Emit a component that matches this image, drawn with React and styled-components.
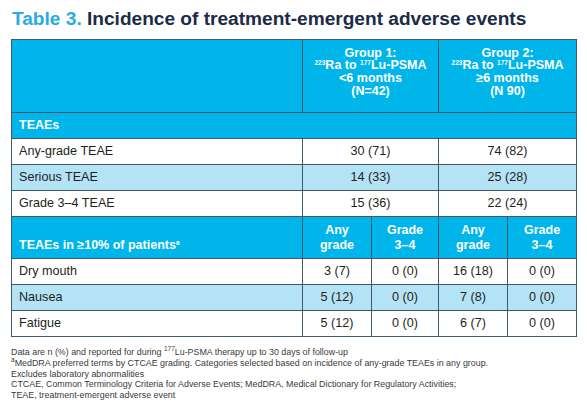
import styled, { createGlobalStyle } from "styled-components";

const Global = createGlobalStyle`
  body {
    margin: 0;
    background: #ffffff;
    font-family: "Liberation Sans", Arial, sans-serif;
  }
`;

const Page = styled.div`
  width: 587px;
  height: 420px;
  padding: 9px 0 0 11px;
  box-sizing: border-box;
`;

const Title = styled.h1`
  margin: 0 0 0 1px;
  font-size: 19.1px;
  line-height: 20px;
  font-weight: 700;
  color: #1c2b47;
  span {
    color: #2aace2;
  }
`;

const Table = styled.table`
  margin-top: 10px;
  width: 565px;
  table-layout: fixed;
  border-collapse: collapse;
  font-size: 12.6px;
  color: #231f20;
`;

const Row = styled.tr`
  height: ${(p) => p.$h || 26}px;
  background: ${(p) =>
    p.$tone === "head" ? "#00b5ea" : p.$tone === "alt" ? "#b4e3f6" : "#ffffff"};
`;

const Cell = styled.td`
  border: 1px solid #3f5968;
  padding: 0 7px;
  text-align: ${(p) => (p.$center ? "center" : "left")};
  vertical-align: middle;
  line-height: 15px;
`;

const Head = styled(Cell).attrs({ as: "th" })`
  color: #ffffff;
  font-weight: 700;
  font-size: 12.5px;
  line-height: ${(p) => p.$lh || 12.6}px;
  vertical-align: ${(p) => (p.$bottom ? "bottom" : "middle")};
  padding-bottom: ${(p) => p.$pb || 0}px;
`;

const Sup = styled.sup`
  font-size: 6.5px;
  line-height: 0;
  vertical-align: 4px;
  font-weight: ${(p) => (p.$light ? 400 : 700)};
`;

const Notes = styled.div`
  margin-top: 10px;
  font-size: 8.9px;
  line-height: 10.8px;
  color: #3a3a3a;
`;

const Note = styled.p`
  margin: 0;
`;

const teaes = [
  ["Any-grade TEAE", "30 (71)", "74 (82)"],
  ["Serious TEAE", "14 (33)", "25 (28)"],
  ["Grade 3–4 TEAE", "15 (36)", "22 (24)"],
];

const common = [
  ["Dry mouth", "3 (7)", "0 (0)", "16 (18)", "0 (0)"],
  ["Nausea", "5 (12)", "0 (0)", "7 (8)", "0 (0)"],
  ["Fatigue", "5 (12)", "0 (0)", "6 (7)", "0 (0)"],
];

export default function App() {
  return (
    <Page>
      <Global />
      <Title>
        <span>Table 3.</span> Incidence of treatment-emergent adverse events
      </Title>
      <Table>
        <colgroup>
          <col style={{ width: 291 }} />
          <col style={{ width: 69 }} />
          <col style={{ width: 67 }} />
          <col style={{ width: 69 }} />
          <col style={{ width: 69 }} />
        </colgroup>
        <tbody>
          <Row $tone="head" $h={73}>
            <Head />
            <Head colSpan={2} $center $pb={8}>
              Group 1:
              <br />
              <Sup>223</Sup>Ra to <Sup>177</Sup>Lu-PSMA
              <br />
              &lt;6 months
              <br />
              (N=42)
            </Head>
            <Head colSpan={2} $center $pb={8}>
              Group 2:
              <br />
              <Sup>223</Sup>Ra to <Sup>177</Sup>Lu-PSMA
              <br />
              ≥6 months
              <br />
              (N 90)
            </Head>
          </Row>
          <Row $tone="head">
            <Head colSpan={5}>TEAEs</Head>
          </Row>
          {teaes.map(([name, a, b], i) => (
            <Row key={name} $tone={i === 1 ? "alt" : ""}>
              <Cell>{name}</Cell>
              <Cell colSpan={2} $center>
                {a}
              </Cell>
              <Cell colSpan={2} $center>
                {b}
              </Cell>
            </Row>
          ))}
          <Row $tone="head" $h={42}>
            <Head $bottom $pb={5} $lh={15}>
              TEAEs in ≥10% of patients<Sup>a</Sup>
            </Head>
            <Head $center $lh={15}>
              Any
              <br />
              grade
            </Head>
            <Head $center $lh={15}>
              Grade
              <br />
              3–4
            </Head>
            <Head $center $lh={15}>
              Any
              <br />
              grade
            </Head>
            <Head $center $lh={15}>
              Grade
              <br />
              3–4
            </Head>
          </Row>
          {common.map(([name, ...vals], i) => (
            <Row key={name} $tone={i === 1 ? "alt" : ""}>
              <Cell>{name}</Cell>
              {vals.map((v, j) => (
                <Cell key={j} $center>
                  {v}
                </Cell>
              ))}
            </Row>
          ))}
        </tbody>
      </Table>
      <Notes>
        <Note>
          Data are n (%) and reported for during <Sup $light>177</Sup>Lu-PSMA therapy up to 30
          days of follow-up
        </Note>
        <Note>
          <Sup $light>a</Sup>MedDRA preferred terms by CTCAE grading. Categories selected based on
          incidence of any-grade TEAEs in any group.
        </Note>
        <Note>Excludes laboratory abnormalities</Note>
        <Note>
          CTCAE, Common Terminology Criteria for Adverse Events; MedDRA, Medical Dictionary for
          Regulatory Activities;
        </Note>
        <Note>TEAE, treatment-emergent adverse event</Note>
      </Notes>
    </Page>
  );
}
